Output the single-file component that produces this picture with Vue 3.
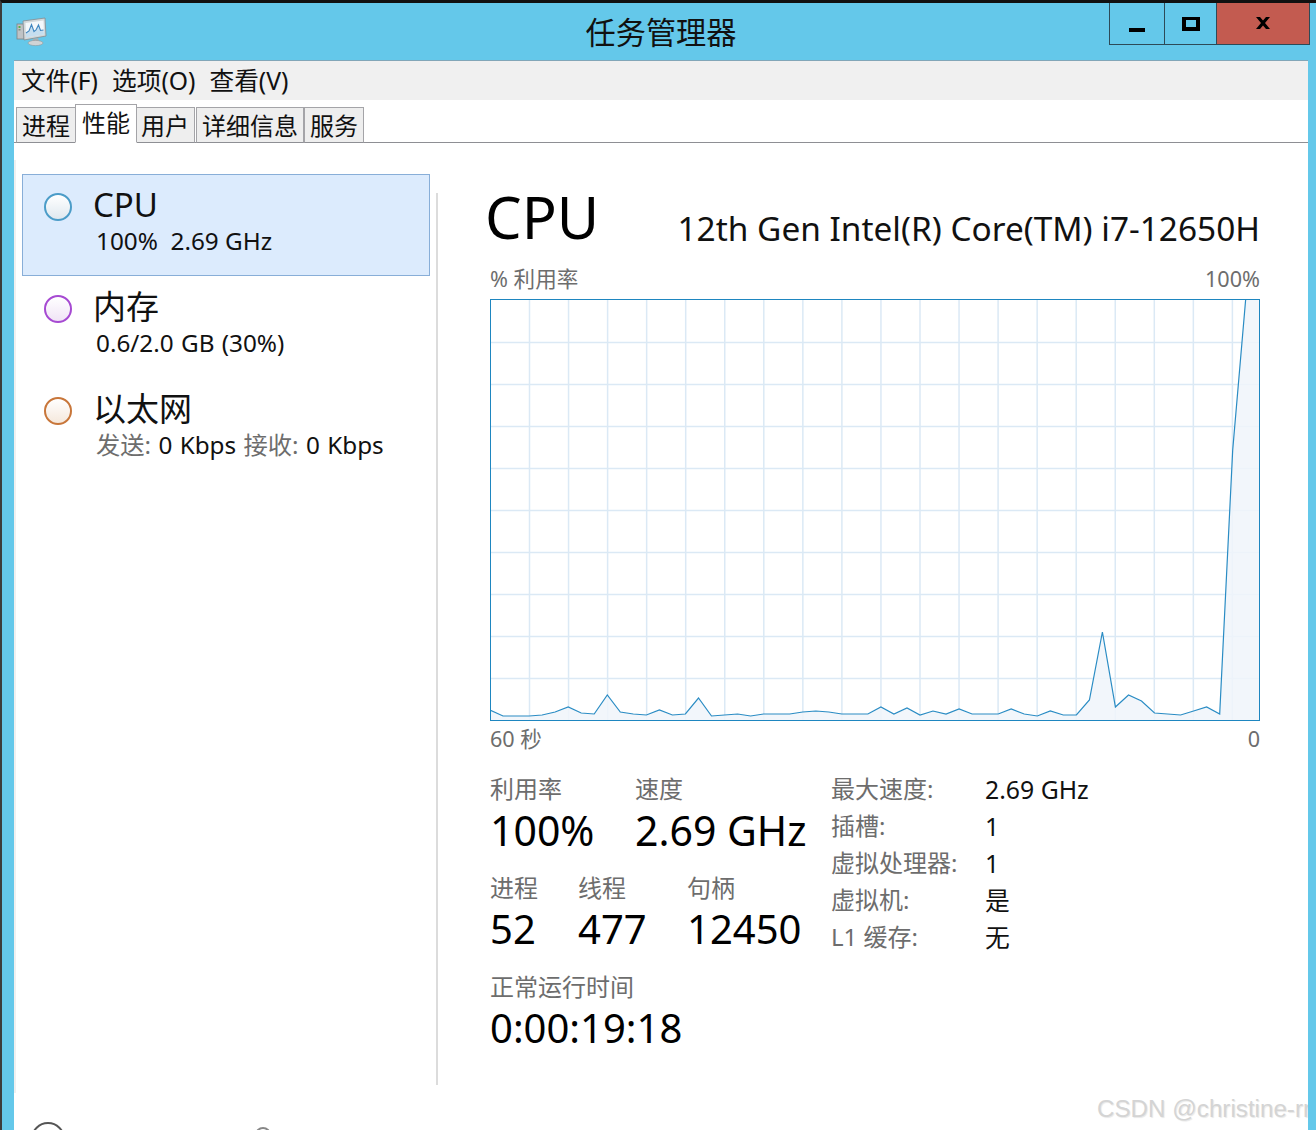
<template>
  <div class="window">
    <div class="titlebar">
      <div class="title-left">
        <svg class="app-icon" viewBox="0 0 32 32" width="32" height="32">
          <rect x="1" y="9" width="7" height="15" fill="#bfc3c6" stroke="#7d8386" stroke-width="0.8" />
          <rect x="2.5" y="11" width="2" height="2" fill="#58b04a" />
          <rect x="2.5" y="14" width="2" height="1.5" fill="#7f907f" />
          <path d="M7 6 L29 3 L30 21 L8 25 Z" fill="#d3d8da" stroke="#858c90" stroke-width="0.8" />
          <path d="M9.5 8 L27.5 5.5 L28 19.5 L10 22.5 Z" fill="#f3f8fb" />
          <path d="M10 18 L13 16 L15.5 9.5 L18 16.5 L20 15 L22.5 10 L24.5 15.5 L27.5 15 L28 19.5 L10 22.5 Z" fill="#a9cde8" opacity="0.6" />
          <path d="M10 18 L13 16 L15.5 9.5 L18 16.5 L20 15 L22.5 10 L24.5 15.5 L27.5 15" fill="none" stroke="#3f86c0" stroke-width="1.1" />
          <path d="M17 24 L22 23 L23 26 L16 27 Z" fill="#a9aeb1" />
          <ellipse cx="19.5" cy="28" rx="7.5" ry="2.6" fill="#d0d3d5" stroke="#93989b" stroke-width="0.6" />
        </svg>
      </div>
      <div class="title-text">任务管理器</div>
      <div class="controls">
        <div class="ctl ctl-min"><span class="min-glyph"></span></div>
        <div class="ctl ctl-max"><span class="max-glyph"></span></div>
        <div class="ctl ctl-close">
          <svg viewBox="0 0 16 12" width="16" height="12">
            <path d="M1 0 H5 L8 3.6 L11 0 H15 L10 6 L15 12 H11 L8 8.4 L5 12 H1 L6 6 Z" fill="#000" />
          </svg>
        </div>
      </div>
    </div>

    <div class="client">
      <div class="menubar">
        <span>文件(F)</span>
        <span>选项(O)</span>
        <span>查看(V)</span>
      </div>

      <div class="tabs">
        <div v-for="t in tabs" :key="t" class="tab" :class="{ active: t === '性能' }">{{ t }}</div>
      </div>

      <div class="body">
        <div class="side">
          <div
            v-for="item in sideItems"
            :key="item.name"
            class="side-item"
            :class="{ selected: item.selected }"
          >
            <span class="dot" :class="item.dot"></span>
            <div class="side-text">
              <div class="side-name">{{ item.name }}</div>
              <div class="side-sub" v-html="item.sub"></div>
            </div>
          </div>
        </div>

        <div class="main">
          <div class="head">
            <div class="head-title">CPU</div>
            <div class="head-model">12th Gen Intel(R) Core(TM) i7-12650H</div>
          </div>
          <div class="axis axis-top">
            <span>% 利用率</span>
            <span>100%</span>
          </div>
          <svg class="graph" viewBox="0 0 770 422" width="770" height="422">
            <line v-for="x in gridX" :key="'x' + x" :x1="x" :x2="x" y1="0" y2="422" class="grid" />
            <line v-for="y in gridY" :key="'y' + y" x1="0" x2="770" :y1="y" :y2="y" class="grid" />
            <polygon :points="areaPoints" class="area" />
            <polyline :points="linePoints" class="line" />
            <rect x="0.5" y="0.5" width="769" height="421" class="frame" />
          </svg>
          <div class="axis axis-bottom">
            <span>60 秒</span>
            <span>0</span>
          </div>

          <div class="stats">
            <div class="stats-left">
              <div class="stat-row row-one">
                <div class="stat stat-usage">
                  <div class="stat-label">利用率</div>
                  <div class="stat-value big">100%</div>
                </div>
                <div class="stat">
                  <div class="stat-label">速度</div>
                  <div class="stat-value big">2.69 GHz</div>
                </div>
              </div>
              <div class="stat-row row-two">
                <div class="stat stat-proc">
                  <div class="stat-label">进程</div>
                  <div class="stat-value">52</div>
                </div>
                <div class="stat stat-thread">
                  <div class="stat-label">线程</div>
                  <div class="stat-value">477</div>
                </div>
                <div class="stat">
                  <div class="stat-label">句柄</div>
                  <div class="stat-value">12450</div>
                </div>
              </div>
              <div class="stat">
                <div class="stat-label">正常运行时间</div>
                <div class="stat-value">0:00:19:18</div>
              </div>
            </div>
            <div class="stats-right">
              <template v-for="r in specs" :key="r[0]">
                <div class="spec-key">{{ r[0] }}</div>
                <div class="spec-val">{{ r[1] }}</div>
              </template>
            </div>
          </div>
        </div>
      </div>

      <div class="footer">
        <span class="foot-circle"></span>
        <span class="foot-small"></span>
      </div>
    </div>

    <div class="watermark">CSDN @christine-rr</div>
  </div>
</template>

<script setup>
import { computed } from 'vue';

const tabs = ['进程', '性能', '用户', '详细信息', '服务'];

const sideItems = [
  { name: 'CPU', sub: '100%&nbsp; 2.69 GHz', dot: 'dot-cpu', selected: true },
  { name: '内存', sub: '0.6/2.0 GB (30%)', dot: 'dot-mem' },
  {
    name: '以太网',
    sub: '<span class="muted">发送:</span> 0 Kbps <span class="muted">接收:</span> 0 Kbps',
    dot: 'dot-net'
  }
];

const specs = [
  ['最大速度:', '2.69 GHz'],
  ['插槽:', '1'],
  ['虚拟处理器:', '1'],
  ['虚拟机:', '是'],
  ['L1 缓存:', '无']
];

// Grid scrolled a bit, so lines don't start on the frame
const gridX = Array.from({ length: 19 }, (_, i) => 39.5 + i * 39.05);
const gridY = Array.from({ length: 9 }, (_, i) => 43.5 + i * 42);

// usage samples, as y in graph pixels
const samples = [
  411, 417, 417, 417, 416, 413, 408, 414, 415, 396, 413, 415, 416, 411, 416, 415,
  399, 417, 416, 415, 417, 415, 415, 415, 413, 412, 413, 415, 415, 415, 408, 415,
  409, 416, 412, 415, 410, 415, 415, 415, 410, 415, 417, 412, 416, 416, 401, 333,
  408, 396, 402, 414, 415, 416, 412, 408, 415, 151, 0, 0
];

const linePoints = computed(() =>
  samples.map((y, i) => `${(i * 13.03).toFixed(1)},${y}`).join(' ')
);
const areaPoints = computed(() => `0,421 ${linePoints.value} 790,421`);
</script>

<style>
html,
body {
  margin: 0;
  background: #fff;
}
</style>

<style scoped>
.window {
  position: relative;
  width: 1316px;
  height: 1130px;
  overflow: hidden;
  box-sizing: border-box;
  background: #64c8ea;
  border-top: 3px solid #111;
  border-left: 2px solid #3c3c3c;
  font-family: "Noto Sans", "Noto Sans CJK SC", sans-serif;
  color: #000;
}

.titlebar {
  display: grid;
  grid-template-columns: 1fr auto 1fr;
  height: 57px;
}

.title-left {
  padding: 12px 0 0 14px;
}

.app-icon {
  display: block;
}

.title-text {
  font-size: 30.2px;
  line-height: 59px;
  padding-left: 4px;
  color: #111;
}

.controls {
  display: flex;
  justify-content: flex-end;
  align-items: flex-start;
  padding-right: 6px;
}

.ctl {
  box-sizing: border-box;
  height: 42px;
  display: flex;
  justify-content: center;
  border: 1px solid #2d4a57;
  border-top: none;
}

.ctl-min {
  width: 55px;
  border-right: none;
}

.ctl-max {
  width: 52px;
  border-right: none;
}

.ctl-close {
  width: 94px;
  background: #c35b50;
  padding-top: 14px;
}

.min-glyph {
  width: 16px;
  height: 4px;
  margin-top: 25px;
  background: #000;
}

.max-glyph {
  box-sizing: border-box;
  width: 18px;
  height: 14px;
  margin-top: 14px;
  border: 4px solid #000;
  border-width: 3px 4px 4px;
}

.client {
  margin: 0 8px 0 12px;
  background: #fff;
  border-top: 1px solid #82a6b8;
  height: 1100px;
}

.menubar {
  display: flex;
  gap: 14px;
  height: 39px;
  padding-left: 7px;
  background: #f0f0f0;
  font-size: 24.7px;
  line-height: 39px;
  color: #111;
}

.tabs {
  display: flex;
  align-items: flex-end;
  height: 43px;
  padding-left: 2px;
  border-bottom: 1px solid #8e8f94;
  box-sizing: border-box;
}

.tab {
  box-sizing: border-box;
  height: 36px;
  margin-bottom: -1px;
  padding: 0 5px;
  margin-right: -1px;
  background: #eeeeee;
  border: 1px solid #a4a4a8;
  border-bottom: 1px solid #8e8f94;
  font-size: 24px;
  line-height: 36px;
  color: #111;
  white-space: nowrap;
}

.tab:nth-child(3) {
  margin-right: 1px;
}

.tab:nth-child(4) {
  margin-right: 0;
}

.tab.active {
  position: relative;
  z-index: 1;
  height: 39px;
  padding: 0 6px;
  margin-right: -2px;
  background: #fff;
  border-bottom-color: #fff;
  line-height: 36px;
}

.body {
  display: flex;
  height: 933px;
  margin-top: 17px;
  border-left: 2px solid #f0f0f0;
}

.side {
  width: 420px;
  padding: 14px 0 0 6px;
  box-sizing: border-box;
}

.side-item {
  box-sizing: border-box;
  display: flex;
  width: 408px;
  height: 102px;
  padding: 0 0 0 21px;
  border: 1px solid transparent;
}

.side-item.selected {
  background: #dcebfd;
  border-color: #88aed8;
}

.selected .side-sub {
  word-spacing: 0;
}

.dot {
  flex: none;
  box-sizing: border-box;
  width: 28px;
  height: 28px;
  margin-top: 18px;
  border-radius: 50%;
  border: 2px solid;
}

.dot-cpu {
  border-color: #4b9cc8;
  background: linear-gradient(#ffffff, #dfe8ef);
}

.dot-mem {
  border-color: #a64ad2;
  background: linear-gradient(#ffffff, #f0e4f6);
}

.dot-net {
  border-color: #c8763a;
  background: linear-gradient(#ffffff, #f5e8dc);
}

.side-text {
  margin-left: 21px;
}

.side-name {
  font-size: 33px;
  line-height: 44px;
  margin-top: 8px;
  color: #111;
}

.side-sub {
  margin-left: 3px;
  font-size: 24.3px;
  line-height: 30px;
  margin-top: -1px;
  word-spacing: 1px;
  color: #111;
  white-space: nowrap;
}

.side-sub :deep(.muted) {
  color: #6d6d6d;
}

.main {
  width: 823px;
  margin-top: 33px;
  padding-left: 52px;
  box-sizing: border-box;
  height: 892px;
  border-left: 2px solid #dcdcdc;
}

.head {
  display: flex;
  justify-content: space-between;
  align-items: flex-end;
  width: 776px;
  margin-left: -5px;
  height: 58px;
}

.head-title {
  font-size: 58px;
  line-height: 58px;
  margin-bottom: 5px;
  color: #000;
}

.head-model {
  font-size: 33.4px;
  line-height: 44px;
  margin-bottom: 1px;
  margin-right: 1px;
  color: #111;
}

.axis {
  display: flex;
  justify-content: space-between;
  width: 770px;
  font-size: 21.6px;
  color: #6d6d6d;
}

.axis-top {
  height: 33px;
  margin-top: 15px;
  line-height: 26px;
}

.axis-bottom {
  height: 37px;
  line-height: 36px;
}

.graph {
  display: block;
}

.grid {
  stroke: #dbe9f5;
  stroke-width: 1.5;
}

.area {
  fill: #f0f5fa;
  fill-opacity: 0.85;
}

.line {
  fill: none;
  stroke: #2a8cc4;
  stroke-width: 1.2;
}

.frame {
  fill: none;
  stroke: #1e86c0;
  stroke-width: 1;
}

.stats {
  display: flex;
  margin-top: 15px;
}

.stats-left {
  width: 341px;
}

.stat-row {
  display: flex;
  height: 99px;
}

.stat-usage {
  width: 145px;
}

.stat-proc {
  width: 88px;
}

.stat-thread {
  width: 109px;
}

.stat-label {
  font-size: 24px;
  line-height: 32px;
  color: #6d6d6d;
}

.stat-value {
  font-size: 40px;
  line-height: 48px;
  margin-top: 1px;
  color: #000;
  white-space: nowrap;
}

.stat-value.big {
  font-size: 41px;
}

.stats-right {
  display: grid;
  grid-template-columns: 154px auto;
  grid-auto-rows: 37.1px;
  font-size: 24px;
  line-height: 32px;
  align-content: start;
}

.spec-key {
  color: #6d6d6d;
}

.spec-val {
  color: #111;
  font-size: 24.8px;
}

.footer {
  position: relative;
  display: flex;
  gap: 190px;
  padding: 29px 0 0 17px;
}

.foot-circle {
  box-sizing: border-box;
  width: 34px;
  height: 34px;
  border-radius: 50%;
  border: 2px solid #555;
}

.foot-small {
  box-sizing: border-box;
  width: 16px;
  height: 16px;
  margin-top: 5px;
  border-radius: 50%;
  border: 2px solid #888;
}

.watermark {
  position: absolute;
  right: 8px;
  bottom: 6px;
  width: 211px;
  overflow: hidden;
  white-space: nowrap;
  font-family: "Liberation Sans", sans-serif;
  font-size: 24.2px;
  line-height: 30px;
  color: #d4d4d4;
  text-shadow: 1px 1px 1px #e8e8e8;
}
</style>
